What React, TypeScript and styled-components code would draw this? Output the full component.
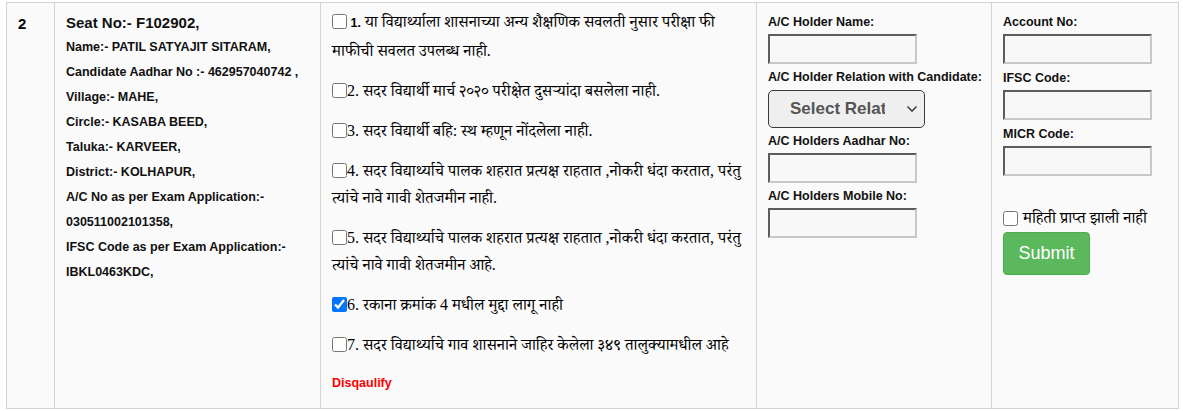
import React from "react";
import styled, { createGlobalStyle } from "styled-components";

const Global = createGlobalStyle`
  html, body { margin: 0; padding: 0; background: #ffffff; }
  body { font-family: "Liberation Sans", Arial, sans-serif; color: #000; }
`;

const Table = styled.table`
  border-collapse: collapse;
  margin: 2px 0 0 6px;
  table-layout: fixed;
  width: 1172px;
`;

const Cell = styled.td<{ $w: number; $pt: number }>`
  width: ${(p) => p.$w}px;
  box-sizing: border-box;
  border: 1px solid #d4d4d4;
  background: #fafafa;
  vertical-align: top;
  padding: ${(p) => p.$pt}px 10px 8px 11px;
  height: 406px;
`;

const SrNo = styled.div`
  font-weight: bold;
  font-size: 15px;
  line-height: 24px;
`;

const Details = styled.div`
  font-weight: bold;
  font-size: 12.5px;
  line-height: 25px;
  color: #111;
`;

const SeatLine = styled.div`
  font-size: 15px;
  line-height: 24px;
`;

const Items = styled.div`
  display: flex;
  flex-direction: column;
  gap: 13px;
`;

const Item = styled.label`
  display: block;
  white-space: nowrap;
  font-family: "Liberation Serif", "Noto Serif Devanagari", "Noto Sans Devanagari", "Lohit Devanagari", serif;
  font-size: 16px;
  line-height: 27px;
  color: #000;
`;

const Box = styled.input`
  width: 15px;
  height: 15px;
  margin: 0;
  vertical-align: -2px;
  accent-color: #0075ff;
`;

const Num = styled.span`
  font-family: "Liberation Sans", Arial, sans-serif;
  font-weight: bold;
  font-size: 12.5px;
`;

const Disq = styled.div`
  color: #ff0000;
  font-weight: bold;
  font-size: 12.5px;
  line-height: 20px;
  margin-top: 2px;
`;

const Form = styled.div`
  display: flex;
  flex-direction: column;
`;

const Label = styled.div`
  font-weight: bold;
  font-size: 12.5px;
  line-height: 16px;
  white-space: nowrap;
  color: #111;
`;

const Input = styled.input<{ $after: number }>`
  box-sizing: border-box;
  width: 149px;
  height: 30px;
  margin: 4px 0 ${(p) => p.$after}px 0;
  border: 2px inset #c8c8c8;
  border-top-color: #b0b0b0;
  border-left-color: #b0b0b0;
  background: #f8f8f8;
`;

const SelectBox = styled.div`
  box-sizing: border-box;
  width: 157px;
  height: 38px;
  margin: 5px 0 5px 0;
  border: 1px solid #3a3a3a;
  border-radius: 5px;
  background: #efefef;
  display: flex;
  align-items: center;
  padding: 0 6px 0 21px;
`;

const SelectText = styled.span`
  font-weight: bold;
  font-size: 17px;
  color: #555;
  overflow: hidden;
  white-space: nowrap;
  width: 95px;
  flex: none;
`;

const Chevron = styled.svg`
  margin-left: auto;
  flex: none;
`;

const CheckRow = styled.label`
  display: flex;
  align-items: center;
  gap: 5px;
  margin-top: 26px;
  font-family: "Liberation Serif", "Noto Serif Devanagari", "Noto Sans Devanagari", "Lohit Devanagari", serif;
  font-size: 16px;
  line-height: 20px;
`;

const Submit = styled.button`
  box-sizing: border-box;
  width: 87px;
  height: 43px;
  margin-top: 4px;
  background: #5cb85c;
  color: #fff;
  border: 1px solid #4cae4c;
  border-radius: 4px;
  font-family: "Liberation Sans", Arial, sans-serif;
  font-size: 18px;
  cursor: pointer;
`;

const items: { n: string; lines: string[]; checked?: boolean; bold?: boolean }[] = [
  { n: " 1.", bold: true, lines: [" या विद्यार्थ्याला शासनाच्या अन्य शैक्षणिक सवलती नुसार परीक्षा फी", "माफीची सवलत उपलब्ध नाही."] },
  { n: "2.", lines: [" सदर विद्यार्थी मार्च २०२० परीक्षेत दुसऱ्यांदा बसलेला नाही."] },
  { n: "3.", lines: [" सदर विद्यार्थी बहि: स्थ म्हणून नोंदलेला नाही."] },
  { n: "4.", lines: [" सदर विद्यार्थ्याचे पालक शहरात प्रत्यक्ष राहतात ,नोकरी धंदा करतात, परंतु", "त्यांचे नावे गावी शेतजमीन नाही."] },
  { n: "5.", lines: [" सदर विद्यार्थ्याचे पालक शहरात प्रत्यक्ष राहतात ,नोकरी धंदा करतात, परंतु", "त्यांचे नावे गावी शेतजमीन आहे."] },
  { n: "6.", checked: true, lines: [" रकाना क्रमांक 4 मधील मुद्दा लागू नाही"] },
  { n: "7.", lines: [" सदर विद्यार्थ्याचे गाव शासनाने जाहिर केलेला ३४९ तालुक्यामधील आहे"] },
];

export default function App() {
  return (
    <>
      <Global />
      <Table>
        <tbody>
          <tr>
            <Cell $w={48} $pt={9}>
              <SrNo>2</SrNo>
            </Cell>
            <Cell $w={266} $pt={8}>
              <Details>
                <SeatLine>Seat No:- F102902,</SeatLine>
                <div>Name:- PATIL SATYAJIT SITARAM,</div>
                <div>Candidate Aadhar No :- 462957040742 ,</div>
                <div>Village:- MAHE,</div>
                <div>Circle:- KASABA BEED,</div>
                <div>Taluka:- KARVEER,</div>
                <div>District:- KOLHAPUR,</div>
                <div>A/C No as per Exam Application:-</div>
                <div>030511002101358,</div>
                <div>IFSC Code as per Exam Application:-</div>
                <div>IBKL0463KDC,</div>
              </Details>
            </Cell>
            <Cell $w={436} $pt={5}>
              <Items>
                {items.map((it, i) => (
                  <Item key={i}>
                    <Box type="checkbox" defaultChecked={it.checked} />
                    {it.bold ? <Num>{it.n}</Num> : it.n}
                    {it.lines.map((l, j) => (
                      <React.Fragment key={j}>
                        {j > 0 && <br />}
                        {l}
                      </React.Fragment>
                    ))}
                  </Item>
                ))}
                <Disq>Disqaulify</Disq>
              </Items>
            </Cell>
            <Cell $w={235} $pt={11}>
              <Form>
                <Label>A/C Holder Name:</Label>
                <Input $after={5} />
                <Label>A/C Holder Relation with Candidate:</Label>
                <SelectBox>
                  <SelectText>Select Relation</SelectText>
                  <Chevron width="12" height="8" viewBox="0 0 12 8">
                    <path d="M1.5 1.5 L6 6 L10.5 1.5" fill="none" stroke="#444" strokeWidth="1.6" />
                  </Chevron>
                </SelectBox>
                <Label>A/C Holders Aadhar No:</Label>
                <Input $after={5} />
                <Label>A/C Holders Mobile No:</Label>
                <Input $after={5} />
              </Form>
            </Cell>
            <Cell $w={187} $pt={11}>
              <Form>
                <Label>Account No:</Label>
                <Input $after={6} />
                <Label>IFSC Code:</Label>
                <Input $after={6} />
                <Label>MICR Code:</Label>
                <Input $after={6} />
                <CheckRow>
                  <Box type="checkbox" />
                  महिती प्राप्त झाली नाही
                </CheckRow>
                <div>
                  <Submit type="button">Submit</Submit>
                </div>
              </Form>
            </Cell>
          </tr>
        </tbody>
      </Table>
    </>
  );
}
